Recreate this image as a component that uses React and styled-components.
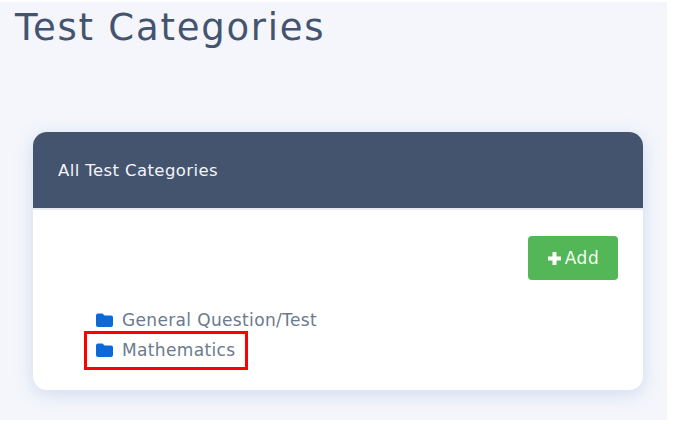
import React from "react";
import styled, { createGlobalStyle } from "styled-components";

const Global = createGlobalStyle`
  html, body { margin: 0; padding: 0; background: #fff; }
  body { font-family: "DejaVu Sans", Inter, sans-serif; }
`;
const Page = styled.div`
  width: 667px; height: 418px; margin-top: 2px; background: #f4f6fb;
  padding: 1px 24px 0 33px; box-sizing: border-box; overflow: hidden;
`;
const Title = styled.h1`
  margin: 0 0 79px -18px; font-size: 37px; line-height: 50px; font-weight: 400;
  color: #44546f; letter-spacing: 1.75px; white-space: nowrap;
`;
const Card = styled.section`
  width: 610px; height: 258px; background: #fff; border-radius: 14px;
  box-shadow: 0 4px 18px rgba(120,150,210,.28); overflow: hidden;
`;
const CardHeader = styled.header`
  height: 76px; background: #44546f; border-bottom: 2px solid #e9ebf0;
  padding: 0 25px; display: flex; align-items: center;
  color: #f2f4f7; font-size: 16.5px; letter-spacing: 0.4px;
`;
const CardBody = styled.div`
  padding: 26px 25px 0 63px; display: flex; flex-direction: column;
`;
const AddButton = styled.button`
  align-self: flex-end; width: 90px; height: 44px; border: 0; border-radius: 4px;
  background: #53b757; color: #f4fbf4; font: 400 17px "DejaVu Sans", sans-serif;
  letter-spacing: 0.6px;
  display: flex; align-items: center; justify-content: center; gap: 3px; padding: 0;
`;
const Tree = styled.ul`
  list-style: none; margin: 25px 0 0; padding: 0;
`;
const Row = styled.li`
  height: 30px; display: flex; align-items: center; gap: 9px;
  color: #6b7a8d; font-size: 17px; letter-spacing: 0.35px; position: relative;
`;
const Highlight = styled.span`
  position: absolute; left: -12px; top: -4px; width: 164px; height: 39px;
  border: 3px solid #ff0000; box-sizing: border-box; pointer-events: none;
`;
const Folder = () => (
  <svg width="17" height="14" viewBox="0 0 17 14" aria-hidden="true">
    <path fill="#0d68d8" d="M2 0.5h4.5l2 2H15a2 2 0 0 1 2 2V12a2 2 0 0 1-2 2H2a2 2 0 0 1-2-2V2.5a2 2 0 0 1 2-2z" />
  </svg>
);
const Plus = () => (
  <svg width="15" height="15" viewBox="0 0 15 15" aria-hidden="true">
    <path fill="#fff" d="M5.5 1h4v4.5H14v4H9.5V14h-4V9.5H1v-4h4.5z" />
  </svg>
);
export default function App() {
  return (
    <>
      <Global />
      <Page>
        <Title>Test Categories</Title>
        <Card>
          <CardHeader>All Test Categories</CardHeader>
          <CardBody>
            <AddButton><Plus />Add</AddButton>
            <Tree>
              <Row><Folder />General Question/Test</Row>
              <Row><Folder />Mathematics<Highlight /></Row>
            </Tree>
          </CardBody>
        </Card>
      </Page>
    </>
  );
}
